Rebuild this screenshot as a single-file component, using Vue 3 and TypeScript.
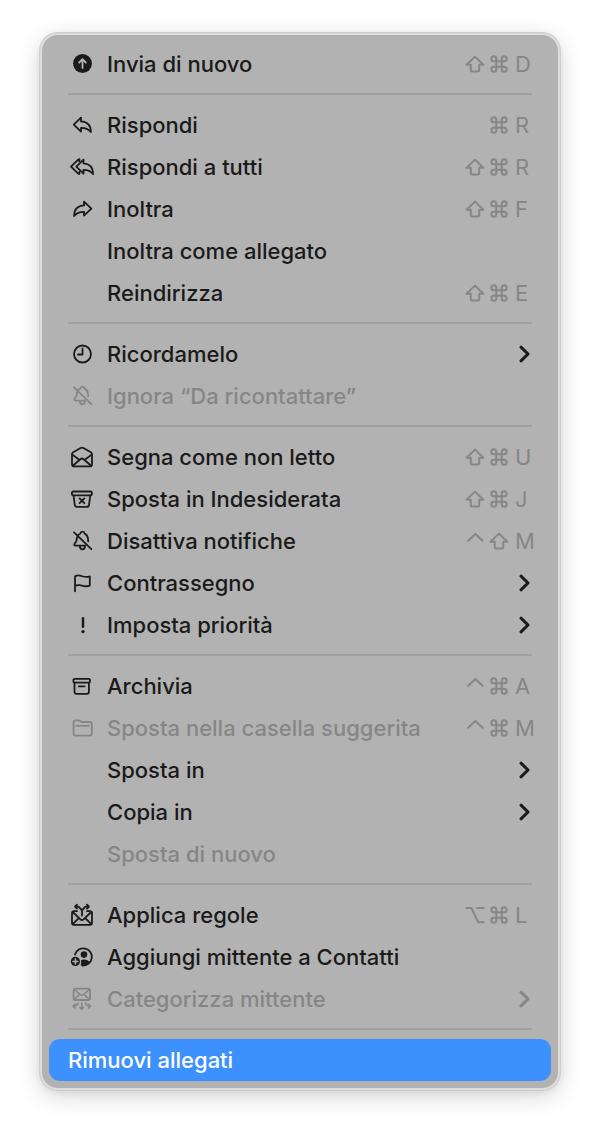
<script setup lang="ts">
type Key = 'shift' | 'cmd' | 'ctrl' | 'opt'

interface Item {
  label: string
  icon?: string
  keys?: Key[]
  letter?: string
  submenu?: boolean
  disabled?: boolean
}

const bell =
  '<path d="M10 8.2C11 7.2 11.8 7 12.3 6.6C12.6 5.2 13.4 4.6 14.5 4.6C15.6 4.6 16.4 5.2 16.7 6.6C19 7.6 19.8 9.4 20 12L20.2 14.4M8.9 10.5L8.6 13.4C8.4 15.3 6.2 16.4 6.2 17.8C6.2 18.4 6.6 18.6 7.2 18.6H17M11.8 18.8C11.8 21 12.8 22.3 14.4 22.3C16 22.3 17 21 17 18.8M6 5.4L23.4 22.2"/>'

const icons: Record<string, string> = {
  send:
    '<circle cx="14.5" cy="13.5" r="9.4" fill="currentColor" stroke="none"/><path d="M14.5 18V9.4M11.2 12.5L14.5 9.2L17.8 12.5" stroke="#b2b2b2"/>',
  reply:
    '<path d="M13 6.6L5.8 13.6L13 20.6V16.9C17.8 16.8 20.4 18 22.9 21C22.9 14.8 19.3 10.8 13 10.4Z"/>',
  replyAll:
    '<path d="M15.5 6.6L8.3 13.6L15.5 20.6V16.9C20 16.8 22.6 18 25.1 21C25.1 14.8 21.8 10.8 15.5 10.4Z"/><path d="M11.4 8.4V6.2L10.2 6.6L3 13.6L10.2 20.6L11.4 21V18.8"/>',
  forward:
    '<path d="M16 6.6L23.4 13.6L16 20.6V16.9C11.2 16.8 8.6 18 6.1 21C6.1 14.8 9.7 10.8 16 10.4Z"/>',
  clock: '<circle cx="14.5" cy="14" r="8.5"/><path d="M14.5 8.5V14.5H10"/>',
  bell,
  envelopeOpen:
    '<path d="M4 11.5Q4 10 5.2 9.3L12.6 5Q14 4.2 15.4 5L22.8 9.3Q24 10 24 11.5V21.2Q24 23.4 21.8 23.4H6.2Q4 23.4 4 21.2Z"/><path d="M4.4 11.6L11.2 16.8M23.6 11.6L16.8 16.8M4.8 22.8L12.4 16.2Q14 14.8 15.6 16.2L23.2 22.8"/>',
  junk:
    '<rect x="3.9" y="6.5" width="20" height="3.8" rx="1.4"/><path d="M5.5 10.4L6.8 20Q7.1 21.9 9 21.9H18.8Q20.7 21.9 21 20L22.3 10.4M11.6 13.4L16.4 18.2M16.4 13.4L11.6 18.2"/>',
  flag:
    '<path d="M7 22.3V7.4Q9.4 6.1 12 6.6C15 7.2 17 9 21.8 7.4V16.6C17.4 18.2 15 16.8 12 16.2Q9.4 15.7 7 17"/>',
  priority:
    '<path d="M15 7.2V15.8" stroke-width="2.5"/><circle cx="15" cy="20.6" r="1.7" fill="currentColor" stroke="none"/>',
  archive:
    '<rect x="5.4" y="6.8" width="16.6" height="3.8" rx="1.2"/><path d="M6.5 10.8V19.8Q6.5 21.9 8.6 21.9H18.8Q20.9 21.9 20.9 19.8V10.8M10.8 14.3H16.6"/>',
  folder:
    '<path d="M5.6 19.4V8.6Q5.6 6.4 7.8 6.4H10.4Q11.3 6.4 12 7L12.6 7.5Q13.2 8 14 8H21.6Q23.8 8 23.8 10.2V19.4Q23.8 21.6 21.6 21.6H7.8Q5.6 21.6 5.6 19.4ZM8.4 11.8H21"/>',
  rules:
    '<path d="M9 10.2H6Q4 10.2 4 12.2V21.8Q4 23.8 6 23.8H22Q24 23.8 24 21.8V12.2Q24 10.2 22 10.2H19M4.8 11L12.4 18.4Q14 19.8 15.6 18.4L23.2 11M4.8 23L10.8 17.2M23.2 23L17.2 17.2M14 14.5V9.4L10.6 5.6H7.2M14 9.4L17.4 5.6H20.8M9 3.6L7 5.6L9 7.6M19 3.6L21 5.6L19 7.6"/>',
  contact:
    '<path d="M7 11.5A8.6 8.6 0 1 1 14.6 22.5"/><circle cx="16" cy="11.6" r="3.3" fill="currentColor" stroke="none"/><path d="M12.8 17.6Q14 16.4 16 16.4Q20 16.4 21.8 19.4Q19.2 22.6 15.4 22.6H12.6Q13.8 20 12.8 17.6Z" fill="currentColor" stroke="none"/><circle cx="7.4" cy="18.4" r="4.6" fill="currentColor" stroke="none"/><path d="M7.4 15.9V20.9M4.9 18.4H9.9" stroke="#b2b2b2" stroke-width="1.5"/>',
  categorize:
    '<rect x="5.6" y="3.6" width="16.4" height="11.4" rx="1.8"/><path d="M6.4 4.6L12.4 9.8Q13.8 11 15.2 9.8L21.2 4.6M6.4 14.2L11.6 9.4M21.2 14.2L16 9.4M13.8 18V24M12 22.4L13.8 24.2L15.6 22.4M10.2 18Q9.2 21 5.4 21.2M7 19.4L5 21.2L7 23M17.4 18Q18.4 21 22.2 21.2M20.6 19.4L22.6 21.2L20.6 23" stroke-width="1.5"/>',
}

const keyNames: Record<Key, string> = {
  shift: 'Maiuscole',
  cmd: 'Comando',
  ctrl: 'Control',
  opt: 'Opzione',
}

const keyShapes: Record<Key, string> = {
  shift: '<path d="M10 1.6L18.4 9.8H14.2V15.2Q14.2 16.4 13 16.4H7Q5.8 16.4 5.8 15.2V9.8H1.6Z"/>',
  cmd:
    '<path d="M7.3 6.3V3.8A2.5 2.5 0 1 0 4.8 6.3H15.2A2.5 2.5 0 1 0 12.7 3.8V14.2A2.5 2.5 0 1 0 15.2 11.7H4.8A2.5 2.5 0 1 0 7.3 14.2Z"/>',
  ctrl: '<path d="M3.2 8.8L10.4 2L17.6 8.8"/>',
  opt: '<path d="M1.4 2H6.4L13 16.2H18.6M12 2H18.6"/>',
}

const groups: Item[][] = [
  [{ label: 'Invia di nuovo', icon: 'send', keys: ['shift', 'cmd'], letter: 'D' }],
  [
    { label: 'Rispondi', icon: 'reply', keys: ['cmd'], letter: 'R' },
    { label: 'Rispondi a tutti', icon: 'replyAll', keys: ['shift', 'cmd'], letter: 'R' },
    { label: 'Inoltra', icon: 'forward', keys: ['shift', 'cmd'], letter: 'F' },
    { label: 'Inoltra come allegato' },
    { label: 'Reindirizza', keys: ['shift', 'cmd'], letter: 'E' },
  ],
  [
    { label: 'Ricordamelo', icon: 'clock', submenu: true },
    { label: 'Ignora “Da ricontattare”', icon: 'bell', disabled: true },
  ],
  [
    { label: 'Segna come non letto', icon: 'envelopeOpen', keys: ['shift', 'cmd'], letter: 'U' },
    { label: 'Sposta in Indesiderata', icon: 'junk', keys: ['shift', 'cmd'], letter: 'J' },
    { label: 'Disattiva notifiche', icon: 'bell', keys: ['ctrl', 'shift'], letter: 'M' },
    { label: 'Contrassegno', icon: 'flag', submenu: true },
    { label: 'Imposta priorità', icon: 'priority', submenu: true },
  ],
  [
    { label: 'Archivia', icon: 'archive', keys: ['ctrl', 'cmd'], letter: 'A' },
    { label: 'Sposta nella casella suggerita', icon: 'folder', keys: ['ctrl', 'cmd'], letter: 'M', disabled: true },
    { label: 'Sposta in', submenu: true },
    { label: 'Copia in', submenu: true },
    { label: 'Sposta di nuovo', disabled: true },
  ],
  [
    { label: 'Applica regole', icon: 'rules', keys: ['opt', 'cmd'], letter: 'L' },
    { label: 'Aggiungi mittente a Contatti', icon: 'contact' },
    { label: 'Categorizza mittente', icon: 'categorize', submenu: true, disabled: true },
  ],
]
</script>

<template>
  <main class="page">
    <div class="menu" role="menu" aria-label="Messaggio">
      <template v-for="(group, g) in groups" :key="g">
        <button
          v-for="item in group"
          :key="item.label"
          type="button"
          role="menuitem"
          class="item"
          :disabled="item.disabled"
          :aria-haspopup="item.submenu ? 'menu' : undefined"
        >
          <span class="icon">
            <svg v-if="item.icon" viewBox="0 0 28 28" aria-hidden="true" v-html="icons[item.icon]" />
          </span>
          <span class="label">{{ item.label }}</span>
          <span v-if="item.keys" class="shortcut">
            <svg
              v-for="key in item.keys"
              :key="key"
              class="key"
              viewBox="0 0 20 18"
              role="img"
              :aria-label="keyNames[key]"
              v-html="keyShapes[key]"
            />
            <span class="letter">{{ item.letter }}</span>
          </span>
          <svg v-if="item.submenu" class="chevron" viewBox="0 0 12 18" aria-hidden="true">
            <path d="M2 2.2L9 9L2 15.8" />
          </svg>
        </button>
        <hr class="separator" />
      </template>
      <button type="button" role="menuitem" class="item selected">
        <span class="label">Rimuovi allegati</span>
      </button>
    </div>
  </main>
</template>

<style>
body {
  margin: 0;
  background: #fff;
}
</style>

<style scoped>
.page {
  padding: 33px 40px 47px;
  font-family: Inter, "Liberation Sans", sans-serif;
}

.menu {
  padding: 8px 7px 7px;
  border: 2px solid #dddddd;
  border-radius: 18px;
  background: #b2b2b2;
  box-shadow:
    0 0 0 1px #cdcdcd,
    0 2px 8px rgba(0, 0, 0, 0.08),
    0 6px 24px rgba(0, 0, 0, 0.16);
}

.item {
  display: flex;
  align-items: center;
  width: 100%;
  height: 42px;
  margin: 0;
  padding: 0 16px 0 19px;
  border: 0;
  border-radius: 11px;
  background: none;
  color: #1a1a1a;
  font: inherit;
  font-size: 22px;
  font-weight: 450;
  line-height: 28px;
  text-align: left;
}

.item:disabled {
  color: #868686;
}

.selected {
  background: #3d91ff;
  color: #fff;
}

.icon {
  flex: none;
  width: 28px;
  height: 28px;
  margin-right: 11px;
}

.icon svg {
  display: block;
  width: 28px;
  height: 28px;
  fill: none;
  stroke: currentColor;
  stroke-width: 1.8;
  stroke-linecap: round;
  stroke-linejoin: round;
}

.label {
  flex: 1;
  white-space: nowrap;
}

.shortcut {
  display: flex;
  align-items: center;
  gap: 4px;
  color: #868686;
  font-weight: 400;
}

.key {
  width: 20px;
  height: 18px;
  fill: none;
  stroke: currentColor;
  stroke-width: 2;
  stroke-linecap: round;
  stroke-linejoin: round;
}

.letter {
  width: 20px;
  margin-left: 2px;
}

.chevron {
  flex: none;
  width: 12px;
  height: 18px;
  margin-right: 4px;
  fill: none;
  stroke: currentColor;
  stroke-width: 3;
  stroke-linecap: round;
  stroke-linejoin: round;
}

.separator {
  height: 2px;
  margin: 8px 19px 9px;
  border: 0;
  background: #a0a0a0;
}
</style>
